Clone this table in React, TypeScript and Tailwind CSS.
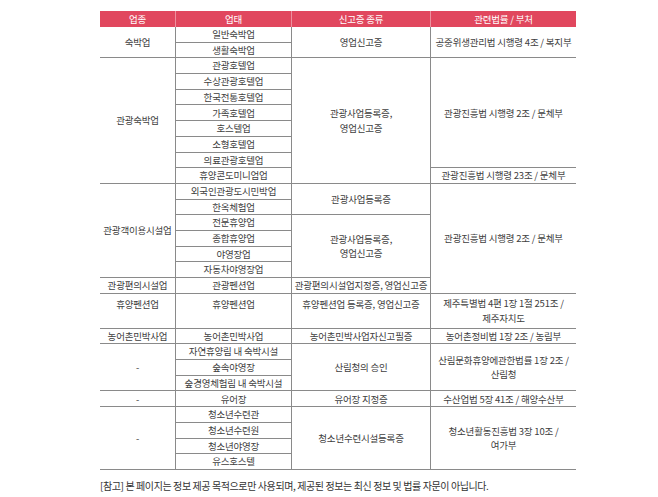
import React from "react";

const line = "border-b border-[#8a8a8a]";
const vline = "border-r border-[#8a8a8a]";
const base =
  "flex items-center justify-center text-center whitespace-nowrap leading-[14.5px] text-[#404040]";

function Cell({ className, children }: { className: string; children: React.ReactNode }) {
  return <div className={`${base} ${line} ${className}`}>{children}</div>;
}

const subTypes: { name: string; pos: string }[] = [
  { name: "일반숙박업", pos: "row-start-2" },
  { name: "생활숙박업", pos: "row-start-3" },
  { name: "관광호텔업", pos: "row-start-4" },
  { name: "수상관광호텔업", pos: "row-start-5" },
  { name: "한국전통호텔업", pos: "row-start-6" },
  { name: "가족호텔업", pos: "row-start-7" },
  { name: "호스텔업", pos: "row-start-8" },
  { name: "소형호텔업", pos: "row-start-9" },
  { name: "의료관광호텔업", pos: "row-start-10" },
  { name: "휴양콘도미니엄업", pos: "row-start-11" },
  { name: "외국인관광도시민박업", pos: "row-start-12" },
  { name: "한옥체험업", pos: "row-start-13" },
  { name: "전문휴양업", pos: "row-start-14" },
  { name: "종합휴양업", pos: "row-start-15" },
  { name: "야영장업", pos: "row-start-16" },
  { name: "자동차야영장업", pos: "row-start-17" },
  { name: "관광펜션업", pos: "row-start-18" },
  { name: "휴양펜션업", pos: "row-start-19 !items-start pt-[3px]" },
  { name: "농어촌민박사업", pos: "row-start-20" },
  { name: "자연휴양림 내 숙박시설", pos: "row-start-21" },
  { name: "숲속야영장", pos: "row-start-22" },
  { name: "숲경영체험림 내 숙박시설", pos: "row-start-23" },
  { name: "유어장", pos: "row-start-24" },
  { name: "청소년수련관", pos: "row-start-25" },
  { name: "청소년수련원", pos: "row-start-26" },
  { name: "청소년야영장", pos: "row-start-27" },
  { name: "유스호스텔", pos: "row-start-28" },
];

export default function App() {
  return (
    <div className="min-h-[497px] w-[658px] bg-white pl-[100px] pt-[11px] font-['Noto_Sans_CJK_KR','Noto_Sans',sans-serif] text-[9.5px] tracking-[-0.2px]">
      <div className="grid w-[476px] grid-cols-[76px_116px_139px_145px] grid-rows-[16px_repeat(17,15.7px)_35px_repeat(9,15.7px)]">
        {/* header */}
        <div className="col-start-1 row-start-1 flex items-center justify-center border-r border-white/40 bg-[#e1475e] text-white">업종</div>
        <div className="col-start-2 row-start-1 flex items-center justify-center border-r border-white/40 bg-[#e1475e] text-white">업태</div>
        <div className="col-start-3 row-start-1 flex items-center justify-center border-r border-white/40 bg-[#e1475e] text-white">신고증 종류</div>
        <div className="col-start-4 row-start-1 flex items-center justify-center bg-[#e1475e] text-white">관련법률 / 부처</div>

        {/* 업종 */}
        <Cell className={`col-start-1 row-start-2 row-span-2 ${vline}`}>숙박업</Cell>
        <Cell className={`col-start-1 row-start-4 row-span-8 ${vline}`}>관광숙박업</Cell>
        <Cell className={`col-start-1 row-start-12 row-span-6 ${vline}`}>관광객이용시설업</Cell>
        <Cell className={`col-start-1 row-start-18 ${vline}`}>관광편의시설업</Cell>
        <Cell className={`col-start-1 row-start-19 !items-start pt-[3px] ${vline}`}>휴양펜션업</Cell>
        <Cell className={`col-start-1 row-start-20 ${vline}`}>농어촌민박사업</Cell>
        <Cell className={`col-start-1 row-start-21 row-span-3 ${vline}`}>-</Cell>
        <Cell className={`col-start-1 row-start-24 ${vline}`}>-</Cell>
        <Cell className={`col-start-1 row-start-25 row-span-4 ${vline}`}>-</Cell>

        {/* 업태 */}
        {subTypes.map((s) => (
          <Cell key={s.name} className={`col-start-2 ${s.pos} ${vline}`}>
            {s.name}
          </Cell>
        ))}

        {/* 신고증 종류 */}
        <Cell className={`col-start-3 row-start-2 row-span-2 ${vline}`}>영업신고증</Cell>
        <Cell className={`col-start-3 row-start-4 row-span-8 ${vline}`}>
          관광사업등록증,
          <br />
          영업신고증
        </Cell>
        <Cell className={`col-start-3 row-start-12 row-span-2 ${vline}`}>관광사업등록증</Cell>
        <Cell className={`col-start-3 row-start-14 row-span-4 ${vline}`}>
          관광사업등록증,
          <br />
          영업신고증
        </Cell>
        <Cell className={`col-start-3 row-start-18 ${vline}`}>관광편의시설업지정증, 영업신고증</Cell>
        <Cell className={`col-start-3 row-start-19 !items-start pt-[3px] ${vline}`}>휴양펜션업 등록증, 영업신고증</Cell>
        <Cell className={`col-start-3 row-start-20 ${vline}`}>농어촌민박사업자신고필증</Cell>
        <Cell className={`col-start-3 row-start-21 row-span-3 ${vline}`}>산림청의 승인</Cell>
        <Cell className={`col-start-3 row-start-24 ${vline}`}>유어장 지정증</Cell>
        <Cell className={`col-start-3 row-start-25 row-span-4 ${vline}`}>청소년수련시설등록증</Cell>

        {/* 관련법률 / 부처 */}
        <Cell className="col-start-4 row-start-2 row-span-2">공중위생관리법 시행령 4조 / 복지부</Cell>
        <Cell className="col-start-4 row-start-4 row-span-7">관광진흥법 시행령 2조 / 문체부</Cell>
        <Cell className="col-start-4 row-start-11">관광진흥법 시행령 23조 / 문체부</Cell>
        <Cell className="col-start-4 row-start-12 row-span-7">관광진흥법 시행령 2조 / 문체부</Cell>
        <Cell className="col-start-4 row-start-19">
          제주특별법 4편 1장 1절 251조 /
          <br />
          제주자치도
        </Cell>
        <Cell className="col-start-4 row-start-20">농어촌정비법 1장 2조 / 농림부</Cell>
        <Cell className="col-start-4 row-start-21 row-span-3">
          산림문화휴양에관한법률 1장 2조 /
          <br />
          산림청
        </Cell>
        <Cell className="col-start-4 row-start-24">수산업법 5장 41조 / 해양수산부</Cell>
        <Cell className="col-start-4 row-start-25 row-span-4">
          청소년활동진흥법 3장 10조 /
          <br />
          여가부
        </Cell>
      </div>

      <p className="mt-[9px] text-[10px] leading-[14px] tracking-[-0.4px] text-[#333]">
        [참고] 본 페이지는 정보 제공 목적으로만 사용되며, 제공된 정보는 최신 정보 및 법률 자문이 아닙니다.
      </p>
    </div>
  );
}
